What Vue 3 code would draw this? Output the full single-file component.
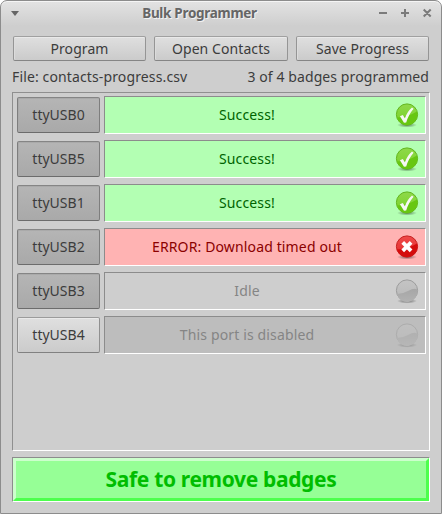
<script setup>
const actions = ['Program', 'Open Contacts', 'Save Progress']
const ports = [
  { name: 'ttyUSB0', state: 'success', text: 'Success!' },
  { name: 'ttyUSB5', state: 'success', text: 'Success!' },
  { name: 'ttyUSB1', state: 'success', text: 'Success!' },
  { name: 'ttyUSB2', state: 'error', text: 'ERROR: Download timed out' },
  { name: 'ttyUSB3', state: 'idle', text: 'Idle' },
  { name: 'ttyUSB4', state: 'disabled', text: 'This port is disabled' },
]
</script>

<template>
  <div class="window">
    <svg class="defs" width="0" height="0">
      <defs>
        <linearGradient id="g-success" x1="0" y1="0" x2="0" y2="1"><stop offset="0" stop-color="#8ed94a" /><stop offset="1" stop-color="#79d025" /></linearGradient>
        <linearGradient id="g-error" x1="0" y1="0" x2="0" y2="1"><stop offset="0" stop-color="#f04a4a" /><stop offset="1" stop-color="#e02a2a" /></linearGradient>
        <linearGradient id="g-idle" x1="0" y1="0" x2="0" y2="1"><stop offset="0" stop-color="#c4c4c4" /><stop offset="1" stop-color="#b8b8b8" /></linearGradient>
        <linearGradient id="g-wedge" x1="0" y1="0" x2="0" y2="1"><stop offset="0" stop-color="#a6a6a6" /><stop offset="1" stop-color="#b2b2b2" /></linearGradient>
        <radialGradient id="g-shadow"><stop offset="0" stop-color="#000" stop-opacity=".5" /><stop offset="1" stop-color="#000" stop-opacity="0" /></radialGradient>
      </defs>
    </svg>
    <header class="titlebar">
      <svg class="menu" width="10" height="6" viewBox="0 0 10 6"><path d="M1 0h8L5 5z" fill="#666" /></svg>
      <h1 class="title">Bulk Programmer</h1>
      <svg class="controls" width="54" height="10" viewBox="0 0 54 10" fill="none" stroke="#7b7b7b" stroke-width="2">
        <path d="M0 5h8M22 5h8M26 1v8M44.7 1.5l7 7M51.7 1.5l-7 7" />
      </svg>
    </header>
    <div class="actions">
      <button v-for="a in actions" :key="a" class="btn">{{ a }}</button>
    </div>
    <div class="info">
      <span class="file">File: contacts-progress.csv</span>
      <span class="count">3 of 4 badges programmed</span>
    </div>
    <main class="ports">
      <div v-for="p in ports" :key="p.name" class="row">
        <button class="btn port" :class="{ pressed: p.state !== 'disabled' }">{{ p.name }}</button>
        <div class="status" :class="p.state">
          <span class="message">{{ p.text }}</span>
          <svg class="icon" width="24" height="25" viewBox="0 0 24 25">
            <ellipse cx="12" cy="22" rx="10" ry="2.6" fill="url(#g-shadow)" />
            <template v-if="p.state === 'success'">
              <circle cx="12" cy="11.5" r="10.6" fill="url(#g-success)" stroke="#62b51d" />
              <path d="M2 14.5Q13 14 22 8.5A10.2 10.2 0 0 1 2 14.5z" fill="#67c711" />
              <path d="M4.9 13.2l2.9-1.2 2.1 3.3Q12.2 8.6 17 4.5l1.6 1.2Q13.4 11.8 11.2 19.4l-2.2.4z" fill="#f6f8f3" />
            </template>
            <template v-else-if="p.state === 'error'">
              <circle cx="12" cy="11.5" r="10.6" fill="url(#g-error)" stroke="#c52020" />
              <path d="M1.8 14.5Q13 14 22 8.5A10.3 10.3 0 0 1 1.8 14.5z" fill="#d40c0c" />
              <path d="M7.7 7.4l8.4 8.4M16.1 7.4l-8.4 8.4" stroke="#fff" stroke-width="3.8" />
            </template>
            <template v-else>
              <circle cx="12" cy="11.5" r="10.6" fill="url(#g-idle)" stroke="#9c9c9c" />
              <path d="M2 15Q8 15 13.5 11.8T22.2 10.5A10.2 10.2 0 0 1 2 15z" fill="url(#g-wedge)" />
            </template>
          </svg>
        </div>
      </div>
    </main>
    <footer class="result"><div class="banner">Safe to remove badges</div></footer>
  </div>
</template>

<style>
body { background: #fff; overflow: hidden; }
</style>

<style scoped>
* { box-sizing: border-box; }
.window {
  width: 442px; height: 514px; padding: 0 11px;
  display: flex; flex-direction: column;
  border: 1px solid #8c8c8c; border-radius: 7px 7px 0 0;
  background: linear-gradient(#e3e3e3 0, #cecece 25px, #cecece 100%);
  box-shadow: inset 0 1px #f5f5f5;
  font-family: "Noto Sans", "Open Sans", sans-serif; font-size: 14px; color: #3c3c3c;
  white-space: nowrap;
}
.defs { display: block; flex: none; height: 0; }
.titlebar { height: 35px; display: grid; grid-template-columns: 12px 1fr 54px; padding-right: 1px; }
.menu { margin: 10px 0 0 -2px; }
.title {
  margin: 3px 0 0; text-align: center; font-size: 13.5px; line-height: 18px; font-weight: 700;
  letter-spacing: -0.3px; color: #666; text-shadow: 1px 1px #f2f2f2;
}
.controls { margin: 7px 0 0 4px; }
.actions { display: grid; grid-template-columns: 133px 134px 133px; gap: 8px; padding-left: 1px; height: 25px; }
.btn {
  padding: 0; font: inherit; color: #3c3c3c; text-align: center;
  border: 1px solid; border-color: #a0a0a0 #959595 #858585; border-radius: 2px;
  background: linear-gradient(#dfdfdf, #cbcbcb); box-shadow: inset 0 1px #e9e9e9, inset 1px 0 #dcdcdc;
}
.actions .btn { letter-spacing: 0.08px; }
.info { display: flex; justify-content: space-between; height: 31px; line-height: 20px; padding-top: 6px; }
.file { letter-spacing: 0.13px; }
.count { letter-spacing: 0.09px; padding-right: 1px; margin-left: auto; }
.ports {
  height: 359px; width: 418px; padding: 3px 3px 0 4px;
  display: flex; flex-direction: column; gap: 6px;
  border: 1px solid; border-color: #8f8f8f #fff #fff #8f8f8f;
}
.row { display: flex; gap: 4px; height: 38px; align-items: center; }
.port { width: 83px; height: 36px; padding-bottom: 2px; border-color: #9b9b9b #909090 #818181; }
.port.pressed { background: linear-gradient(#b5b5b5, #a9a9a9); border-color: #858585 #7e7e7e #6c6c6c; box-shadow: inset 0 1px #aaa, inset 1px 0 #aaa; }
.status {
  width: 322px; height: 38px; display: flex; align-items: center; padding-right: 6px;
  border: 1px solid; border-color: #8c8c8c #fff #fff #8c8c8c;
}
.message { flex: 1; text-align: center; padding: 0 6px 2px 0; letter-spacing: 0.14px; }
.success { background: #b3ffb3; color: #006400; }
.error { background: #ffb3b3; color: #8b0000; }
.idle { background: #cecece; color: #858585; }
.disabled { background: #bdbdbd; color: #858585; }
.disabled .icon { opacity: .5; }
.result { margin-top: 6px; width: 418px; height: 45px; border: 1px solid; border-color: #8c8c8c #fff #fff #8c8c8c; }
.banner {
  height: 43px; border: 3px solid; border-color: #ccffcc #4dff4d #4dff4d #ccffcc;
  background: #96ff96; color: #00bd00; font-size: 21px; line-height: 37px; font-weight: 700; text-align: center;
  letter-spacing: -0.35px;
}
</style>
